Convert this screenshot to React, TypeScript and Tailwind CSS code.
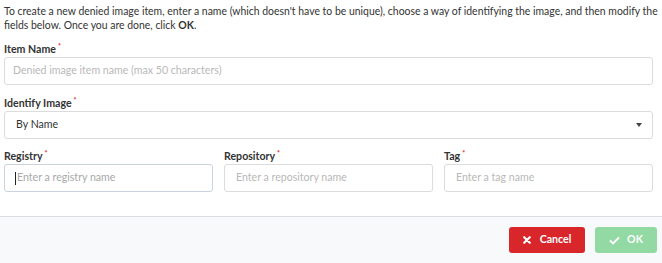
import React from "react";

function Req() {
  return <span className="ml-[2px] relative -top-[4px] text-[7px] text-[#e02424]">*</span>;
}

function Label({ children }: { children: React.ReactNode }) {
  return (
    <div className="text-[10.6px] font-bold text-[#333] leading-[14px] h-[14px] mb-[1px]">
      {children}
      <Req />
    </div>
  );
}

export default function App() {
  return (
    <div className="w-[662px] h-[263px] bg-white flex flex-col" style={{ fontFamily: "Lato, 'Open Sans', sans-serif" }}>
      <div className="flex-1 pl-[4px] pr-[9px] pt-[4px]">
        <p className="text-[10.45px] leading-[14px] text-[#333] mr-[-6px]">
          To create a new denied image item, enter a name (which doesn't have to be unique), choose a way of identifying the image, and then modify the fields below. Once you are done, click <b>OK</b>.
        </p>
        <div className="mt-[10px]">
          <Label>Item Name</Label>
          <div className="h-[28px] border border-[#dcdcdc] rounded-[3px] flex items-center px-[8px] text-[10.6px] text-[#b8b8b8]">
            Denied image item name (max 50 characters)
          </div>
        </div>
        <div className="mt-[11px]">
          <Label>Identify Image</Label>
          <div className="h-[28px] border border-[#dcdcdc] rounded-[3px] flex items-center justify-between pl-[11px] pr-[10px] text-[10.6px] text-[#333]">
            <span>By Name</span>
            <svg width="6" height="4" viewBox="0 0 6 4"><path d="M0 0h6L3 4z" fill="#444" /></svg>
          </div>
        </div>
        <div className="mt-[10px] grid grid-cols-3 gap-[11px]">
          <div>
            <Label>Registry</Label>
            <div className="mt-[1px] h-[28px] border border-[#c9d4de] rounded-[3px] flex items-center pl-[10px] text-[10.6px] text-[#a8a8a8]">
              <span className="w-[1px] h-[13px] bg-[#222] mr-[1px]" />
              Enter a registry name
            </div>
          </div>
          <div>
            <Label>Repository</Label>
            <div className="mt-[1px] h-[28px] border border-[#dcdcdc] rounded-[3px] flex items-center px-[11px] text-[10.6px] text-[#b8b8b8]">
              Enter a repository name
            </div>
          </div>
          <div>
            <Label>Tag</Label>
            <div className="mt-[1px] h-[28px] border border-[#dcdcdc] rounded-[3px] flex items-center px-[11px] text-[10.6px] text-[#b8b8b8]">
              Enter a tag name
            </div>
          </div>
        </div>
      </div>
      <div className="h-[47px] shrink-0 border-t border-[#dadde2] bg-[#f8f9fb] flex items-center justify-end gap-[10px] pr-[5px]">
        <button className="w-[76px] h-[26px] rounded-[3px] bg-[#d9262b] text-white text-[10.6px] font-bold flex items-center justify-center gap-[9px]">
          <svg width="8" height="8" viewBox="0 0 10 10"><path d="M1.5 1.5l7 7M8.5 1.5l-7 7" stroke="white" strokeWidth="2.6" strokeLinecap="round" /></svg>
          Cancel
        </button>
        <button className="w-[62px] h-[26px] rounded-[3px] bg-[#93d9a4] text-white text-[10.6px] font-bold flex items-center justify-center gap-[7px]">
          <svg width="11" height="9" viewBox="0 0 11 9"><path d="M1 4.5l3 3L10 1.5" stroke="white" strokeWidth="1.8" fill="none" /></svg>
          OK
        </button>
      </div>
    </div>
  );
}
